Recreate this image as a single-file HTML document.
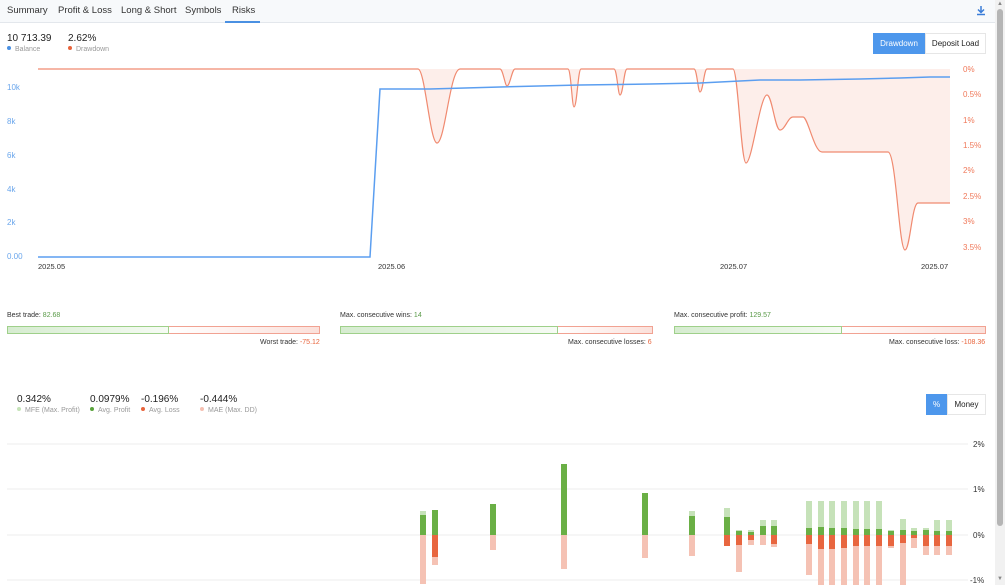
<!DOCTYPE html>
<html><head><meta charset="utf-8"><style>
*{margin:0;padding:0;box-sizing:border-box}
body{width:1005px;height:585px;overflow:hidden;background:#fff;font-family:"Liberation Sans",Arial,sans-serif;position:relative;color:#222}
.tabs{position:absolute;left:0;top:0;width:995px;height:23px;background:#f7f9fb;border-bottom:1px solid #e3e7ec}
.tab{position:absolute;top:5px;font-size:9.5px;color:#333}
.abs{position:absolute}
.sm{font-size:7px;color:#999}
.dot{display:inline-block;width:4px;height:4px;border-radius:50%;margin-right:4px;vertical-align:1px}
.bar{position:absolute;height:8px;display:flex}
.bar .g{height:8px;border:1px solid #9fd08a;background:linear-gradient(90deg,#d6ecd0,#f6fbf4)}
.bar .r{height:8px;border:1px solid #f1a292;border-left:none;background:linear-gradient(90deg,#fff,#fbe0da)}
.lbl{font-size:7px;color:#333;position:absolute}
</style></head><body>
<div class="tabs">
<span class="tab" style="left:7px">Summary</span>
<span class="tab" style="left:58px">Profit &amp; Loss</span>
<span class="tab" style="left:121px">Long &amp; Short</span>
<span class="tab" style="left:185px">Symbols</span>
<span class="tab" style="left:232px">Risks</span>
<div class="abs" style="left:225px;top:21px;width:35px;height:2px;background:#4a90e2"></div>
<svg class="abs" style="left:976px;top:5px" width="10" height="11"><path d="M5 1v6M2 4.5l3 3 3-3M1 9.5h8" stroke="#3b7dd8" stroke-width="1.5" fill="none"/></svg>
</div>
<div class="abs" style="left:7px;top:33px;font-size:10px">10 713.39</div>
<div class="abs sm" style="left:7px;top:46px"><span class="dot" style="background:#4a90e2"></span>Balance</div>
<div class="abs" style="left:68px;top:33px;font-size:10px">2.62%</div>
<div class="abs sm" style="left:68px;top:46px"><span class="dot" style="background:#e8643c"></span>Drawdown</div>
<div class="abs" style="left:873px;top:33px;width:52px;height:21px;background:#4d97ec;color:#fff;font-size:8px;line-height:21px;text-align:center">Drawdown</div>
<div class="abs" style="left:925px;top:33px;width:61px;height:21px;border:1px solid #e6e6e6;font-size:8px;line-height:19px;text-align:center">Deposit Load</div>

<svg class="abs" style="left:0;top:60px" width="995" height="220" font-family="Liberation Sans" font-size="8">
<g transform="translate(0,-60)">
<path d="M418 69 C425 69 430 143 437 143 C445 143 450 69 460 69 L500 69 C503 69 505 86 507 86 C510 86 512 69 515 69 L568 69 C571 69 572 107 574 107 C577 107 578 69 581 69 L614 69 C617 69 618 95 620 95 C623 95 624 69 627 69 L694 69 C697 69 698 92 700 92 C703 92 704 69 707 69 L733 69 C738 69 741 163 746 163 C752 163 760 95 767 95 C772 95 775 130 780 130 C785 130 788 117 793 117 L803 117 C808 117 814 152 822 152 L888 152 C896 152 899 250 905 250 C910 250 912 203 918 203 L950 203 L950 69 Z" fill="#fdeeea"/>
<path d="M38 69 L418 69 C425 69 430 143 437 143 C445 143 450 69 460 69 L500 69 C503 69 505 86 507 86 C510 86 512 69 515 69 L568 69 C571 69 572 107 574 107 C577 107 578 69 581 69 L614 69 C617 69 618 95 620 95 C623 95 624 69 627 69 L694 69 C697 69 698 92 700 92 C703 92 704 69 707 69 L733 69 C738 69 741 163 746 163 C752 163 760 95 767 95 C772 95 775 130 780 130 C785 130 788 117 793 117 L803 117 C808 117 814 152 822 152 L888 152 C896 152 899 250 905 250 C910 250 912 203 918 203 L950 203" fill="none" stroke="#f08a70" stroke-width="1.2"/>
<path d="M38 257 L370 257 L380 89 L430 89 L500 87 L580 85 L650 84 L700 83 L760 80 L800 80 L860 79 L900 78 L930 77 L950 77" fill="none" stroke="#5b9ef0" stroke-width="1.5"/>
<g fill="#6aa6ec"><text x="7" y="90">10k</text><text x="7" y="124">8k</text><text x="7" y="158">6k</text><text x="7" y="192">4k</text><text x="7" y="225">2k</text><text x="7" y="259">0.00</text></g>
<g fill="#f0795a"><text x="963" y="72">0%</text><text x="963" y="97">0.5%</text><text x="963" y="123">1%</text><text x="963" y="148">1.5%</text><text x="963" y="173">2%</text><text x="963" y="199">2.5%</text><text x="963" y="224">3%</text><text x="963" y="250">3.5%</text></g>
<g fill="#333" font-size="7.5"><text x="38" y="269">2025.05</text><text x="378" y="269">2025.06</text><text x="720" y="269">2025.07</text><text x="921" y="269">2025.07</text></g>
</g></svg>

<div class="lbl" style="left:7px;top:312px">Best trade: <span style="color:#5a9a48">82.68</span></div>
<div class="bar" style="left:7px;top:326px"><div class="g" style="width:162px"></div><div class="r" style="width:151px"></div></div>
<div class="lbl" style="left:260px;top:339px">Worst trade: <span style="color:#e8643c">-75.12</span></div>
<div class="lbl" style="left:340px;top:312px">Max. consecutive wins: <span style="color:#5a9a48">14</span></div>
<div class="bar" style="left:340px;top:326px"><div class="g" style="width:218px"></div><div class="r" style="width:95px"></div></div>
<div class="lbl" style="left:568px;top:339px">Max. consecutive losses: <span style="color:#e8643c">6</span></div>
<div class="lbl" style="left:674px;top:312px">Max. consecutive profit: <span style="color:#5a9a48">129.57</span></div>
<div class="bar" style="left:674px;top:326px"><div class="g" style="width:168px"></div><div class="r" style="width:144px"></div></div>
<div class="lbl" style="left:889px;top:339px">Max. consecutive loss: <span style="color:#e8643c">-108.36</span></div>

<div class="abs" style="left:17px;top:394px;font-size:10px">0.342%</div>
<div class="abs sm" style="left:17px;top:407px"><span class="dot" style="background:#c5e3b8"></span>MFE (Max. Profit)</div>
<div class="abs" style="left:90px;top:394px;font-size:10px">0.0979%</div>
<div class="abs sm" style="left:90px;top:407px"><span class="dot" style="background:#5aa33c"></span>Avg. Profit</div>
<div class="abs" style="left:141px;top:394px;font-size:10px">-0.196%</div>
<div class="abs sm" style="left:141px;top:407px"><span class="dot" style="background:#e8643c"></span>Avg. Loss</div>
<div class="abs" style="left:200px;top:394px;font-size:10px">-0.444%</div>
<div class="abs sm" style="left:200px;top:407px"><span class="dot" style="background:#f5c0b2"></span>MAE (Max. DD)</div>
<div class="abs" style="left:926px;top:394px;width:21px;height:21px;background:#4d97ec;color:#fff;font-size:8px;line-height:21px;text-align:center">%</div>
<div class="abs" style="left:947px;top:394px;width:39px;height:21px;border:1px solid #e6e6e6;font-size:8px;line-height:19px;text-align:center">Money</div>

<svg class="abs" style="left:0;top:0" width="995" height="585" font-family="Liberation Sans" font-size="8">
<g stroke="#eee" stroke-width="1"><line x1="7" y1="444" x2="968" y2="444"/><line x1="7" y1="489" x2="968" y2="489"/><line x1="7" y1="535" x2="968" y2="535"/><line x1="7" y1="580" x2="968" y2="580"/></g>
<g fill="#333"><text x="973" y="447">2%</text><text x="973" y="492">1%</text><text x="973" y="538">0%</text><text x="970" y="583">-1%</text></g>
<g id="bars"></g>
</svg>
<script>
var d=[[420,511,515,535,584],[432,510,510,557,565],[490,504,504,535,550],[561,464,464,535,569],[642,493,493,535,558],[689,511,516,535,556],
[724,508,517,546,546],[736,530,531,545,572],[748,530,532,540,545],[760,520,526,535,545],[771,520,526,544,547],[806,501,528,544,575],[818,501,527,549,585],[829,501,528,549,585],[841,501,528,548,585],[853,501,529,546,585],[864,501,529,546,585],[876,501,529,546,585],[888,530,531,546,548],[900,519,530,543,585],[911,528,531,538,548],[923,528,530,546,555],[934,520,531,546,555],[946,520,531,546,555]];
var s='',z=535;
d.forEach(function(b){var x=b[0],w=6;
s+='<rect x="'+x+'" y="'+b[1]+'" width="'+w+'" height="'+(z-b[1])+'" fill="#c6e2b9"/>';
s+='<rect x="'+x+'" y="'+b[2]+'" width="'+w+'" height="'+(z-b[2])+'" fill="#6aaf45"/>';
s+='<rect x="'+x+'" y="'+z+'" width="'+w+'" height="'+(b[4]-z)+'" fill="#f5c2b4"/>';
if(b[3]>z)s+='<rect x="'+x+'" y="'+z+'" width="'+w+'" height="'+(b[3]-z)+'" fill="#e8663f"/>';});
document.getElementById('bars').innerHTML=s;
</script>
<div class="abs" style="left:995px;top:0;width:10px;height:585px;background:#f1f1f1"></div>
<div class="abs" style="left:997px;top:9px;width:6px;height:517px;background:#b5b5b5;border-radius:3px"></div>
<div class="abs" style="left:997px;top:1px;font-size:6px;color:#888">▲</div>
<div class="abs" style="left:997px;top:576px;font-size:6px;color:#888">▼</div>
</body></html>
